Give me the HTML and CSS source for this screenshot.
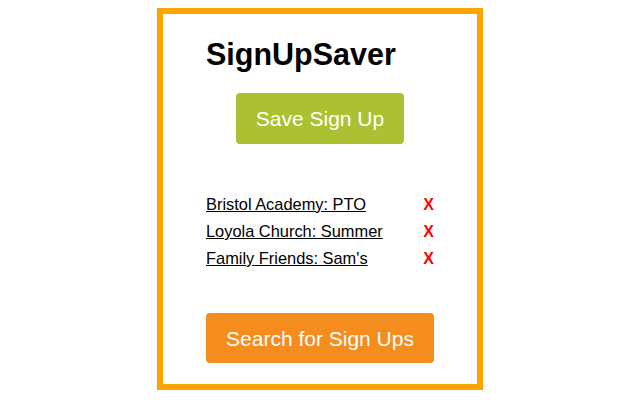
FILE: index.html
```html
<!DOCTYPE html>
<html>
<head>
<meta charset="utf-8">
<link rel="stylesheet" href="styles.css">
</head>
<body>
<div class="popup">
  <div class="column">
    <h1 class="title">SignUpSaver</h1>
    <div class="save-row">
      <button class="btn btn-save">Save Sign Up</button>
    </div>
    <ul class="list">
      <li class="item"><a class="item-link" href="#">Bristol Academy: PTO</a><span class="remove">X</span></li>
      <li class="item"><a class="item-link" href="#">Loyola Church: Summer</a><span class="remove">X</span></li>
      <li class="item"><a class="item-link" href="#">Family Friends: Sam's</a><span class="remove">X</span></li>
    </ul>
    <button class="btn btn-search">Search for Sign Ups</button>
  </div>
</div>
</body>
</html>
```

FILE: styles.css
```css
html, body {
  margin: 0;
  padding: 0;
  background: #ffffff;
}

body {
  padding-top: 8px;
  font-family: "Liberation Sans", Arial, Helvetica, sans-serif;
  color: #000;
}

.popup {
  box-sizing: border-box;
  width: 326px;
  margin: 0 auto;
  border: 6px solid #ffa500;
  padding: 22px 0 21px;
  display: flex;
  justify-content: center;
}

.column {
  width: 228px;
  display: flex;
  flex-direction: column;
}

.title {
  margin: 0;
  font-size: 30.5px;
  line-height: 36px;
  font-weight: 700;
  color: #000;
}

.save-row {
  margin-top: 21px;
  display: flex;
  justify-content: center;
}

.btn {
  box-sizing: border-box;
  border: none;
  border-radius: 4px;
  font-family: "Liberation Sans", Arial, Helvetica, sans-serif;
  font-size: 21px;
  line-height: 23px;
  color: #fff;
  white-space: nowrap;
  cursor: pointer;
}

.btn-save {
  background: #acc132;
  width: 168px;
  height: 51px;
  padding: 0;
}

.list {
  list-style: none;
  margin: 47px 0 0;
  padding: 0;
}

.item {
  display: flex;
  justify-content: space-between;
  align-items: baseline;
  font-size: 16.4px;
  line-height: 27px;
}

.item-link {
  color: #000;
  text-decoration: underline;
}

.remove {
  color: #ff0000;
  font-weight: 700;
  font-size: 16px;
}

.btn-search {
  margin-top: 41px;
  width: 228px;
  height: 50px;
  padding: 0;
  background: #f58c1e;
}
```
